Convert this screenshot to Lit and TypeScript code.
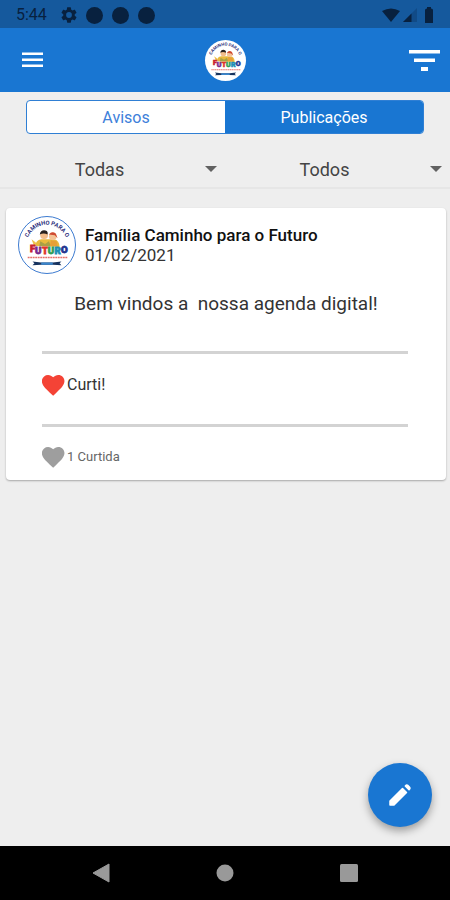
import { LitElement, html, css, svg } from "lit";
import { customElement, property, state } from "lit/decorators.js";

const HEART =
  "M12 21.35l-1.45-1.32C5.4 15.36 2 12.28 2 8.5 2 5.42 4.42 3 7.5 3c1.74 0 3.41.81 4.5 2.09C13.09 3.81 14.76 3 16.5 3 19.58 3 22 5.42 22 8.5c0 3.78-3.4 6.86-8.55 11.54L12 21.35z";

@customElement("school-logo")
class SchoolLogo extends LitElement {
  static styles = css`
    :host {
      display: block;
      border-radius: 50%;
      overflow: hidden;
      background: #fff;
    }
    svg {
      display: block;
      width: 100%;
      height: 100%;
    }
    .arc {
      font: 700 6px Roboto, sans-serif;
      fill: #2c2f7c;
    }
    .word {
      font: 900 10px Roboto, sans-serif;
      text-anchor: middle;
      stroke-width: 0.8;
    }
  `;

  render() {
    const letters: [string, number, number, string][] = [
      ["F", 14, 36, "#c9222c"],
      ["U", 20, 38, "#7a2a8c"],
      ["T", 27, 38, "#e0332c"],
      ["U", 33, 38, "#2f9e57"],
      ["R", 40, 38, "#1c8fb5"],
      ["O", 47, 37, "#23348f"],
    ];
    return html`<svg viewBox="0 0 58 58" role="img" aria-label="Caminho para o Futuro">
      <path id="arc" d="M8 29A21 21 0 0 1 50 29" fill="none" />
      <text class="arc"><textPath href="#arc" startOffset="50%" text-anchor="middle">CAMINHO PARA O</textPath></text>
      <path d="M17 30q0-6 6-7h13q6 1 6 8z" fill="#e9b93c" />
      <path d="M13 23l5 4-2 4z" fill="#efc34a" />
      <circle cx="26" cy="19" r="4" fill="#f2bd8b" />
      <path d="M21.500 18q1-5 6-4 3 1 2 4-4-2-8 0z" fill="#27211f" />
      <circle cx="35" cy="20" r="4" fill="#f4c497" />
      <path d="M31 18q3-4 7-1l2 5-3-3z" fill="#cf4a32" />
      <path d="M22 25l5 3 4-3 2 5H21z" fill="#a9a045" />
      <path d="M33 24l6 1 1 5h-8z" fill="#e8a037" />
      ${letters.map(
        ([l, x, y, c]) => svg`<text class="word" x=${x} y=${y} fill=${c} stroke=${c}>${l}</text>`,
      )}
      <path d="M9 42H50" stroke="#e5706a" stroke-width="1.500" stroke-dasharray="2 .6" />
      <path d="M14 46l9 1h12l9-1-2 2 2 2-9-.5H23l-9 .5 2-2z" fill="#17335f" />
      <path d="M23 47h12v2.500H23z" fill="#3b86cc" />
    </svg>`;
  }
}

@customElement("filter-select")
class FilterSelect extends LitElement {
  @property() label = "";
  @property({ attribute: false }) options: string[] = [];

  static styles = css`
    :host {
      display: grid;
      align-items: center;
    }
    select,
    svg {
      grid-area: 1 / 1;
    }
    select {
      appearance: none;
      width: 100%;
      height: 36px;
      border: 0;
      padding: 0 26px 0 0;
      background: none;
      font: 18px Roboto, sans-serif;
      color: #444;
      text-align: center;
      text-align-last: center;
    }
    svg {
      justify-self: end;
      margin-right: 8px;
      pointer-events: none;
    }
  `;

  render() {
    return html`
      <select aria-label=${this.label}>
        ${this.options.map((o) => html`<option>${o}</option>`)}
      </select>
      <svg width="12" height="6" viewBox="0 0 12 6"><path d="M0 0h12L6 6z" fill="#616161" /></svg>
    `;
  }
}

@customElement("app-root")
class AppRoot extends LitElement {
  @state() private tab = 1;

  static styles = css`
    :host {
      display: flex;
      flex-direction: column;
      min-height: 100vh;
      background: #eee;
      color: #333;
      font: 16px/20px Roboto, sans-serif;
    }
    * {
      box-sizing: border-box;
    }
    svg {
      display: block;
    }
    button {
      border: 0;
      padding: 0;
      background: none;
      font: inherit;
      color: inherit;
      cursor: pointer;
    }
    .status {
      display: flex;
      align-items: center;
      justify-content: space-between;
      height: 28px;
      padding: 2px 16px 0;
      background: #15599d;
      color: #08213f;
    }
    .group {
      display: flex;
      align-items: center;
      gap: 9px;
    }
    .group.end {
      gap: 3px;
    }
    .time {
      margin-right: 5px;
    }
    .bar {
      display: grid;
      grid-template-columns: 1fr auto 1fr;
      align-items: center;
      height: 64px;
      padding: 0 10px 0 22px;
      background: #1976d2;
      color: #fff;
    }
    .bar school-logo {
      width: 41px;
      height: 41px;
      margin-right: 12px;
    }
    .bar .filter {
      justify-self: end;
    }
    .bar .menu {
      justify-self: start;
    }
    main {
      position: relative;
      flex: 1;
    }
    .tabs {
      display: grid;
      grid-template-columns: 1fr 1fr;
      height: 34px;
      margin: 8px 26px 0;
      border: 1px solid #2f7fd4;
      border-radius: 4px;
      overflow: hidden;
      background: #fff;
      color: #3d80da;
    }
    .tabs button {
      padding-top: 2px;
    }
    .tabs .on {
      background: #1976d2;
      color: #fff;
    }
    .filters {
      display: grid;
      grid-template-columns: 1fr 1fr;
      margin-top: 17px;
      border-bottom: 2px solid #e6e6e6;
      height: 38px;
    }
    .card {
      margin: 19px 4px 0 6px;
      padding: 8px 12px;
      border-radius: 4px;
      background: #fff;
      box-shadow: 0 1px 2px rgba(0, 0, 0, 0.3);
    }
    .head {
      display: flex;
      align-items: center;
      gap: 9px;
    }
    .head school-logo {
      width: 58px;
      height: 58px;
      border: 1px solid #3d7bd0;
    }
    h2 {
      margin: 0;
      font-size: 17px;
      line-height: 20px;
      font-weight: 500;
      color: #111;
    }
    time {
      display: block;
      font-size: 17px;
    }
    .message {
      margin: 18px 0 0;
      font-size: 19px;
      line-height: 24px;
      text-align: center;
      white-space: pre-wrap;
    }
    .actions {
      margin: 35px 26px 0 24px;
    }
    .row {
      display: flex;
      align-items: center;
      gap: 1px;
      height: 73px;
      padding-bottom: 8px;
      border-top: 3px solid #d3d3d3;
    }
    .row button {
      display: flex;
      align-items: center;
      gap: 1px;
    }
    .row.count {
      height: 48px;
      padding: 14px 0 0;
      font-size: 13px;
      color: #666;
    }
    .fab {
      position: absolute;
      right: 18px;
      bottom: 19px;
      display: grid;
      place-items: center;
      width: 64px;
      height: 64px;
      border-radius: 50%;
      background: #1976d2;
      box-shadow: 0 4px 8px rgba(0, 0, 0, 0.35);
    }
    .nav {
      display: flex;
      align-items: center;
      justify-content: center;
      gap: 100px;
      height: 54px;
      background: #000;
    }
    .nav button {
      display: grid;
      place-items: center;
      width: 24px;
      height: 24px;
    }
  `;

  private heart(color: string) {
    return html`<svg width="24" height="24" viewBox="0 0 24 24"><path d=${HEART} transform="translate(-2.400 -1.500) scale(1.130)" fill=${color} /></svg>`;
  }

  render() {
    return html`
      <div class="status">
        <div class="group">
          <span class="time">5:44</span>
          <svg width="16" height="16" viewBox="2 2 20 20" fill="currentColor">
            <path d="M19.140 12.940c.04-.3.06-.61.06-.94 0-.32-.02-.64-.07-.94l2.030-1.580a.49.49 0 0 0 .12-.61l-1.920-3.320a.488.488 0 0 0-.59-.22l-2.390.96c-.5-.38-1.030-.7-1.620-.94l-.36-2.540a.484.484 0 0 0-.48-.41h-3.840c-.24 0-.43.17-.47.41l-.36 2.540c-.59.24-1.130.57-1.620.94l-2.390-.96c-.22-.08-.47 0-.59.22L2.740 8.870c-.12.21-.08.47.12.61l2.030 1.580c-.05.3-.09.63-.09.94s.02.64.07.94l-2.030 1.580a.49.49 0 0 0-.12.61l1.920 3.320c.12.22.37.29.59.22l2.390-.96c.5.38 1.030.7 1.620.94l.36 2.540c.05.24.24.41.48.41h3.840c.24 0 .44-.17.47-.41l.36-2.540c.59-.24 1.130-.56 1.620-.94l2.390.96c.22.08.47 0 .59-.22l1.920-3.320c.12-.22.07-.47-.12-.61l-2.010-1.580zM12 15.600A3.600 3.600 0 1 1 12 8.400a3.600 3.600 0 0 1 0 7.200z" />
          </svg>
          ${[0, 1, 2].map(
            () => html`<svg width="17" height="17" viewBox="0 0 17 17"><circle cx="8.5" cy="8.5" r="8.5" fill="currentColor" /></svg>`,
          )}
        </div>
        <div class="group end">
          <svg width="18" height="14" viewBox="0 0 18 14"><path d="M0 3Q9-2 18 3L9 14z" fill="currentColor" /></svg>
          <svg width="14" height="14" viewBox="0 0 14 14">
            <path d="M14 0v14H0z" fill="#114b87" />
            <path d="M8.500 5.500V14H0z" fill="currentColor" />
          </svg>
          <svg width="14" height="16" viewBox="0 0 14 16"><path d="M5 3q0-1.500 2-1.500V0h4v1.500q2 0 2 1.500v13H5z" fill="currentColor" /></svg>
        </div>
      </div>
      <header class="bar">
        <button class="menu" aria-label="Menu">
          <svg width="22" height="16" viewBox="0 0 22 16" fill="currentColor"><path d="M0 .5h21v2.500H0zM0 6.500h21V9H0zM0 12.500h21V15H0z" /></svg>
        </button>
        <school-logo></school-logo>
        <button class="filter" aria-label="Filtrar">
          <svg width="31" height="21" viewBox="0 0 31 21" fill="currentColor"><path d="M0 0h31v3.500H0zM5 8.500h21V12H5zM12 17h7v4h-7z" /></svg>
        </button>
      </header>
      <main>
        <div class="tabs" role="tablist">
          ${["Avisos", "Publicações"].map(
            (t, i) => html`<button
              role="tab"
              aria-selected=${this.tab === i}
              class=${this.tab === i ? "on" : ""}
              @click=${() => (this.tab = i)}
            >${t}</button>`,
          )}
        </div>
        <div class="filters">
          <filter-select label="Turmas" .options=${["Todas"]}></filter-select>
          <filter-select label="Alunos" .options=${["Todos"]}></filter-select>
        </div>
        <article class="card">
          <div class="head">
            <school-logo></school-logo>
            <div>
              <h2>Família Caminho para o Futuro</h2>
              <time datetime="2021-02-01">01/02/2021</time>
            </div>
          </div>
          <p class="message">${"Bem vindos a  nossa agenda digital!"}</p>
          <div class="actions">
            <div class="row"><button>${this.heart("#f44336")}<span>Curti!</span></button></div>
            <div class="row count">${this.heart("#9e9e9e")}<span>1 Curtida</span></div>
          </div>
        </article>
        <button class="fab" aria-label="Escrever">
          <svg width="24" height="24" viewBox="0 0 24 24" fill="#fff" stroke="#fff" stroke-linejoin="round">
            <path d="M2 18L14.500 5.500l4 4L6 22H2z" stroke-width="1.500" />
            <path d="M17.300 3l1-.8q.7-.5 1.400.2l1.900 1.900q.7.700.2 1.400l-.8 1z" stroke-width="1.500" />
          </svg>
        </button>
      </main>
      <nav class="nav">
        <button aria-label="Voltar">
          <svg width="18" height="20" viewBox="0 0 18 20"><path d="M17 1v18L1 10z" fill="#999" stroke="#999" stroke-linejoin="round" /></svg>
        </button>
        <button aria-label="Início">
          <svg width="18" height="18" viewBox="0 0 18 18"><circle cx="9" cy="9" r="8.500" fill="#999" /></svg>
        </button>
        <button aria-label="Recentes">
          <svg width="18" height="18" viewBox="0 0 18 18"><rect width="18" height="18" rx="1.500" fill="#999" /></svg>
        </button>
      </nav>
    `;
  }
}
